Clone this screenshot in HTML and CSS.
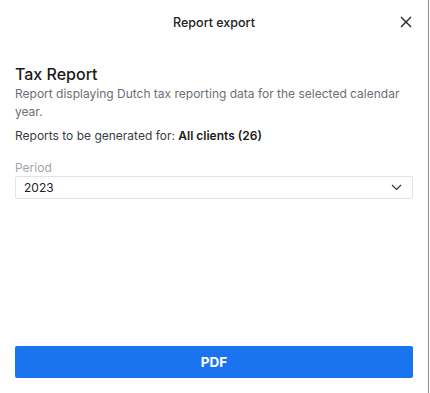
FILE: index.html
```html
<!DOCTYPE html>
<html>
<head>
<meta charset="utf-8">
<link rel="stylesheet" href="styles.css">
</head>
<body>
<div class="modal">
  <header class="header">
    <div class="header-title">Report export</div>
    <button class="close" aria-label="Close">
      <svg width="12" height="12" viewBox="0 0 12 12"><path d="M1 1L11 11M11 1L1 11" stroke="#222" stroke-width="1.4" fill="none"/></svg>
    </button>
  </header>
  <main class="content">
    <h1 class="title">Tax Report</h1>
    <p class="desc">Report displaying Dutch tax reporting data for the selected calendar year.</p>
    <p class="target">Reports to be generated for: <strong>All clients (26)</strong></p>
    <div class="field">
      <label class="label">Period</label>
      <div class="select">
        <span>2023</span>
        <svg width="11" height="7" viewBox="0 0 11 7"><path d="M1 1L5.5 5.5L10 1" stroke="#333" stroke-width="1.1" fill="none"/></svg>
      </div>
    </div>
  </main>
  <footer class="footer">
    <button class="pdf">PDF</button>
  </footer>
</div>
</body>
</html>
```

FILE: styles.css
```css
html, body {
  margin: 0;
  padding: 0;
  background: #fff;
}
body {
  font-family: Inter, "Noto Sans", sans-serif;
  width: 430px;
  height: 393px;
  overflow: hidden;
}
.modal {
  width: 429px;
  height: 393px;
  border-right: 1px solid #8a8a8a;
  display: flex;
  flex-direction: column;
  box-sizing: border-box;
}
.header {
  height: 44px;
  display: flex;
  align-items: center;
  justify-content: center;
  position: relative;
}
.header-title {
  font-size: 12.5px;
  font-weight: 500;
  color: #222;
}
.close {
  position: absolute;
  right: 16px;
  top: 16px;
  background: none;
  border: 0;
  padding: 0;
  width: 12px;
  height: 12px;
  display: flex;
}
.content {
  padding: 19px 15px 0 15px;
  flex: 1;
}
.title {
  margin: 0;
  font-size: 16px;
  font-weight: 500;
  color: #1a1a1a;
  line-height: 22px;
}
.desc {
  margin: 0;
  font-size: 12px;
  line-height: 18px;
  color: #6b6f76;
}
.target {
  margin: 6px 0 0 0;
  font-size: 12px;
  line-height: 18px;
  color: #3a3d42;
}
.target strong {
  font-weight: 600;
  color: #1a1a1a;
}
.field {
  margin-top: 16px;
}
.label {
  display: block;
  font-size: 12px;
  line-height: 14px;
  color: #a3a6ab;
}
.select {
  margin-top: 1px;
  height: 23px;
  border: 1px solid #e2e4e8;
  border-radius: 2px;
  box-sizing: border-box;
  display: flex;
  align-items: center;
  justify-content: space-between;
  padding: 0 10px 0 8px;
  font-size: 12px;
  color: #222;
}
.footer {
  padding: 0 15px 15px 15px;
}
.pdf {
  width: 100%;
  height: 32px;
  border: 0;
  border-radius: 2px;
  background: #1b74ef;
  color: #fff;
  font-family: Inter, "Noto Sans", sans-serif;
  font-weight: 700;
  font-size: 13.5px;
  padding: 0;
}
```
